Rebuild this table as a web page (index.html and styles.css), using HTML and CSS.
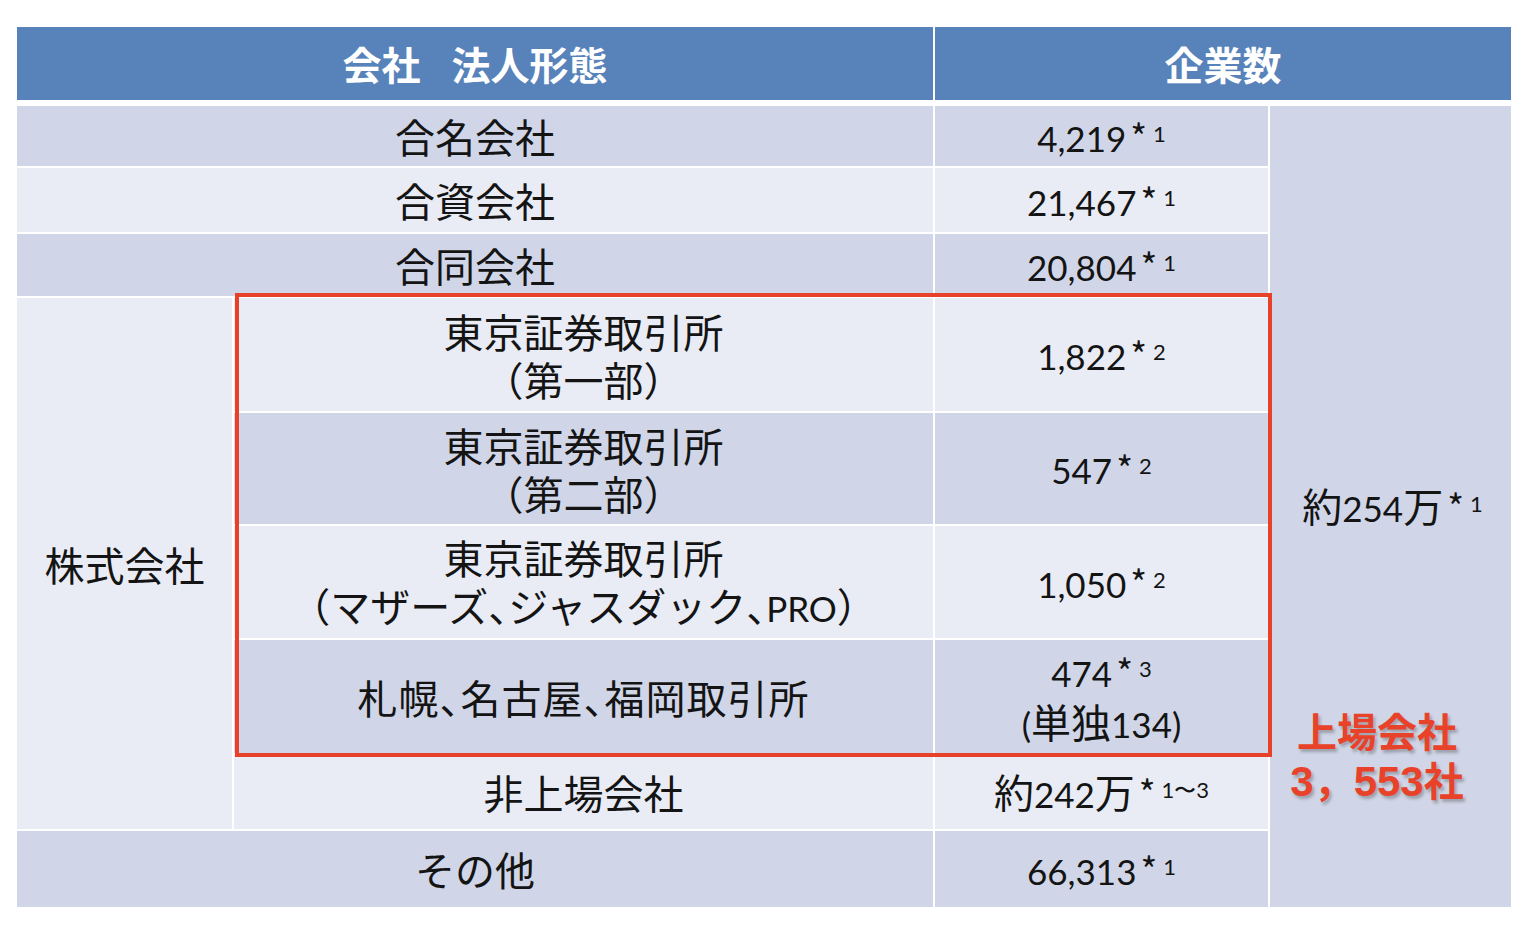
FILE: index.html
```html
<!DOCTYPE html>
<html lang="ja">
<head>
<meta charset="utf-8">
<title>会社 法人形態 企業数</title>
<link rel="stylesheet" href="styles.css">
</head>
<body>
<div class="sheet">
  <div class="head">
    <div class="hcell"><div class="t">会社&nbsp;法人形態</div></div>
    <div class="hcell"><div>企業数</div></div>
  </div>
  <div class="grid">
    <div class="cell dark r1 name"><div>合名会社</div></div>
    <div class="cell dark r1 c3"><div><span class="num">4,219</span><span class="ast">*</span><span class="sn">1</span></div></div>
    <div class="cell dark total">
      <div class="tv"><span>約</span><span class="num">254</span><span>万</span><span class="ast">*</span><span class="sn">1</span></div>
      <div class="listed">上場会社<br><span class="lnum">3</span>，<span class="lnum">553</span>社</div>
    </div>

    <div class="cell light r2 name"><div>合資会社</div></div>
    <div class="cell light r2 c3"><div><span class="num">21,467</span><span class="ast">*</span><span class="sn">1</span></div></div>

    <div class="cell dark r3 name"><div>合同会社</div></div>
    <div class="cell dark r3 c3"><div><span class="num">20,804</span><span class="ast">*</span><span class="sn">1</span></div></div>

    <div class="cell light kabu"><div>株式会社</div></div>

    <div class="cell light r4 c2"><div>東京証券取引所<br><span class="p">（</span>第一部<span class="p">）</span></div></div>
    <div class="cell light r4 c3"><div><span class="num">1,822</span><span class="ast">*</span><span class="sn">2</span></div></div>

    <div class="cell dark r5 c2"><div>東京証券取引所<br><span class="p">（</span>第二部<span class="p">）</span></div></div>
    <div class="cell dark r5 c3"><div><span class="num">547</span><span class="ast">*</span><span class="sn">2</span></div></div>

    <div class="cell light r6 c2"><div>東京証券取引所<br><span class="p">（</span>マザーズ<span class="p">、</span>ジャスダック<span class="p">、</span><span class="num">PRO</span><span class="p">）</span></div></div>
    <div class="cell light r6 c3"><div><span class="num">1,050</span><span class="ast">*</span><span class="sn">2</span></div></div>

    <div class="cell dark r7 c2"><div class="wide">札幌<span class="p">、</span>名古屋<span class="p">、</span>福岡取引所</div></div>
    <div class="cell dark r7 c3"><div><span class="num">474</span><span class="ast">*</span><span class="sn">3</span><br><span class="num">(</span>単独<span class="num">134)</span></div></div>

    <div class="cell light r8 c2"><div>非上場会社</div></div>
    <div class="cell light r8 c3"><div><span>約</span><span class="num">242</span><span>万</span><span class="ast">*</span><span class="sn">1〜3</span></div></div>

    <div class="cell dark r9 name"><div>その他</div></div>
    <div class="cell dark r9 c3"><div><span class="num">66,313</span><span class="ast">*</span><span class="sn">1</span></div></div>

    <div class="redbox"></div>
  </div>
</div>
</body>
</html>
```

FILE: styles.css
```css
* { box-sizing: border-box; }

html, body {
  margin: 0;
  padding: 0;
  background: #ffffff;
}

body {
  font-family: "Noto Sans CJK JP", "Noto Sans", sans-serif;
  color: #141414;
}

.sheet {
  width: 1494px;
  margin: 27px 0 0 17px;
}

.head {
  display: grid;
  grid-template-columns: 916px 576px;
  column-gap: 2px;
  height: 73px;
  margin-bottom: 6px;
}

.hcell {
  background: #5882ba;
  color: #ffffff;
  font-weight: 700;
  font-size: 39px;
  display: flex;
  align-items: center;
  justify-content: center;
  line-height: 1;
  white-space: nowrap;
}

.hcell .t { word-spacing: 22px; }

.grid {
  display: grid;
  grid-template-columns: 215px 699px 333px 241px;
  grid-template-rows: 60px 64px 62px 113px 111px 112px 113px 74px 76px;
  gap: 2px;
}

.cell {
  display: flex;
  align-items: center;
  justify-content: center;
  text-align: center;
  font-size: 40px;
  line-height: 48px;
  white-space: nowrap;
}

.dark { background: #d0d6e7; }
.light { background: #e9ecf4; }

.name { grid-column: 1 / 3; }
.c2 { grid-column: 2; }
.c3 { grid-column: 3; }

.r1 { grid-row: 1; }
.r2 { grid-row: 2; }
.r3 { grid-row: 3; }
.r4 { grid-row: 4; }
.r5 { grid-row: 5; }
.r6 { grid-row: 6; }
.r7 { grid-row: 7; }
.r8 { grid-row: 8; }
.r9 { grid-row: 9; }

.kabu {
  grid-column: 1;
  grid-row: 4 / 9;
}

.total {
  grid-column: 4;
  grid-row: 1 / 10;
  position: relative;
}

.tv { padding-left: 4px; }

.wide { letter-spacing: 1px; }

.num {
  font-family: Lato, "Noto Sans", sans-serif;
  font-size: 35px;
}

.ast {
  font-family: "Noto Sans CJK JP", sans-serif;
  font-size: 36px;
  margin-left: 4px;
  position: relative;
  top: -1px;
}

.sn {
  font-family: Lato, "Noto Sans", sans-serif;
  font-size: 22px;
  margin-left: 6px;
  vertical-align: 10px;
  line-height: 1;
}

.p {
  font-feature-settings: "halt";
}

.listed {
  position: absolute;
  left: 7px;
  top: 600px;
  width: 200px;
  text-align: center;
  color: #e8432a;
  font-weight: 700;
  font-size: 40px;
  line-height: 49px;
  text-shadow: 2px 3px 3px rgba(60, 60, 60, 0.35);
}

.lnum {
  font-family: "Liberation Sans", Arial, sans-serif;
  font-size: 42px;
}

.redbox {
  grid-column: 2 / 4;
  grid-row: 4 / 8;
  margin: -5px -4px -4px 1px;
  border: 4px solid #e8412a;
  z-index: 2;
  pointer-events: none;
}
```
